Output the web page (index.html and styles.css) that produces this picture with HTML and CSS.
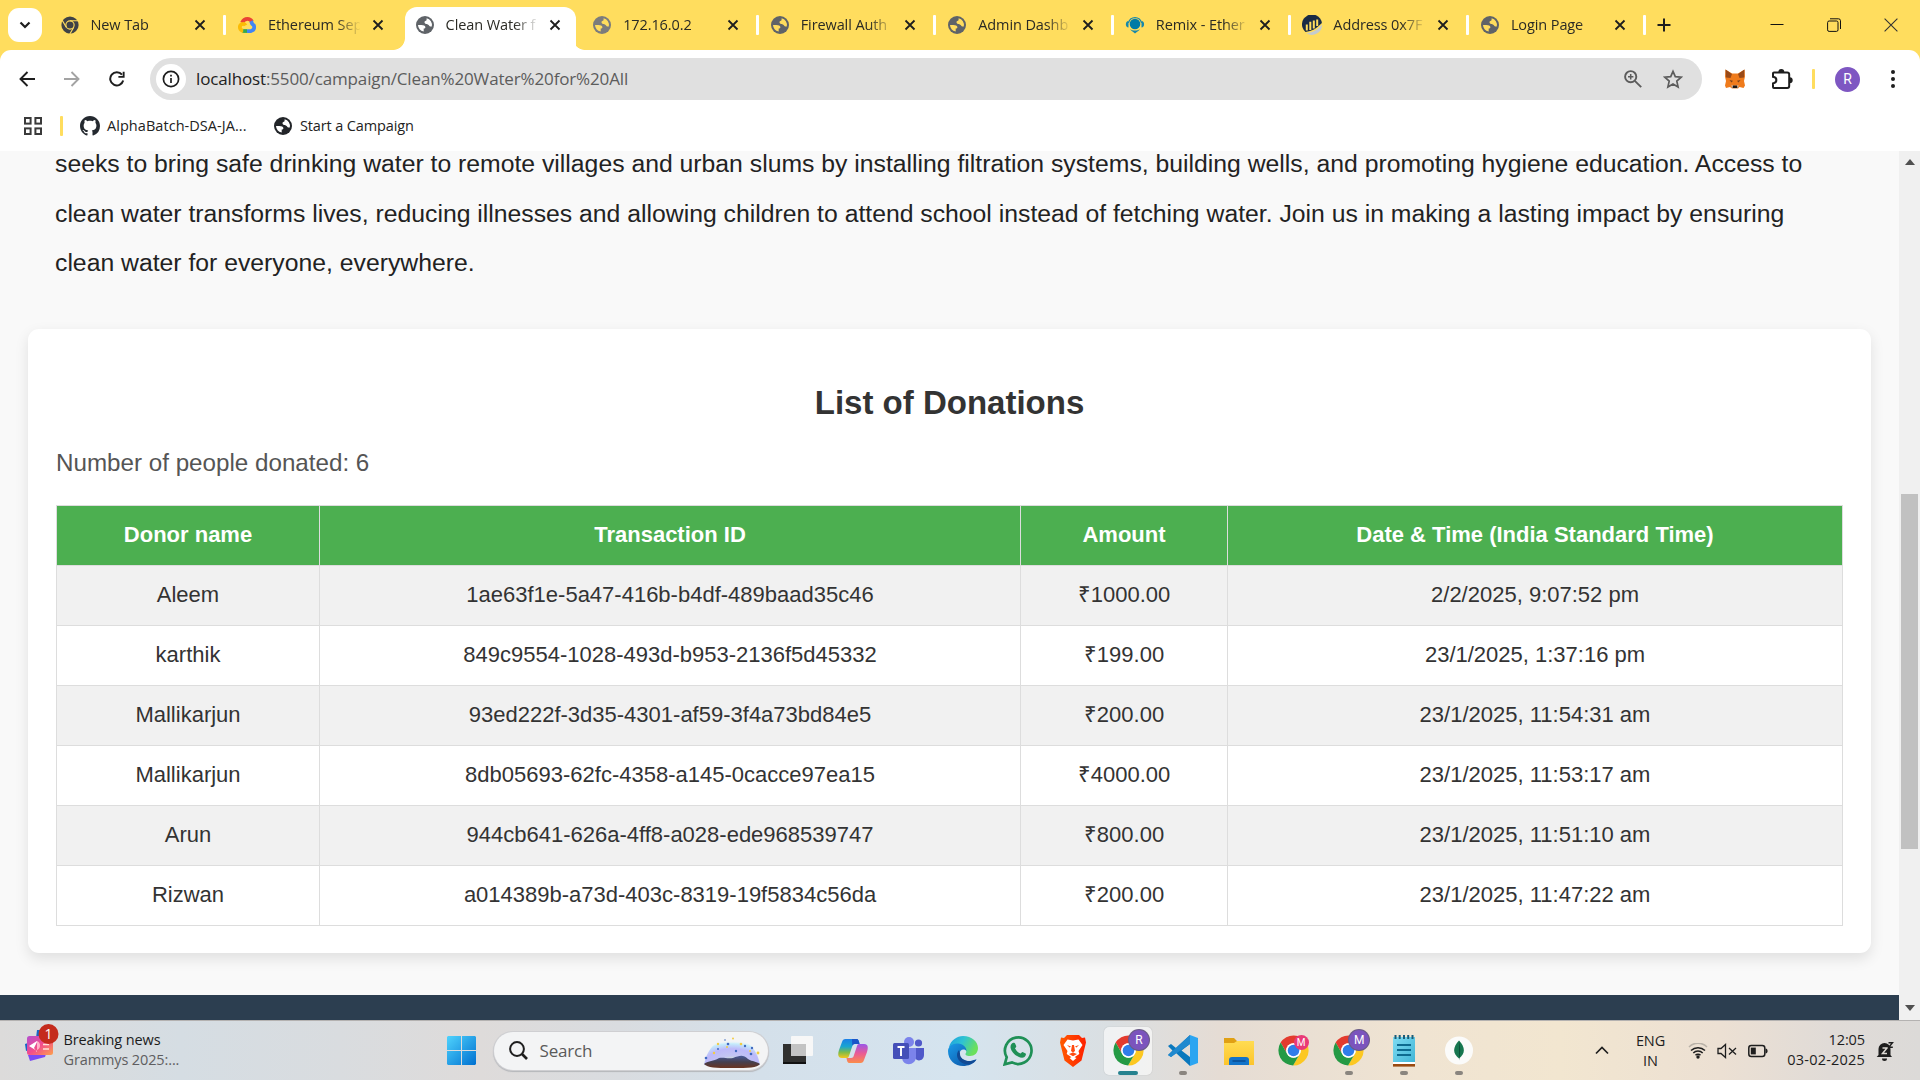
FILE: index.html
```html
<!DOCTYPE html>
<html lang="en">
<head>
<meta charset="utf-8">
<title>Clean Water for All</title>
<link rel="stylesheet" href="styles.css">
</head>
<body>
<svg class="defs" aria-hidden="true">
  <defs>
    <linearGradient id="win" x1="0" y1="0" x2="1" y2="1"><stop offset="0" stop-color="#4fd3fd"/><stop offset="1" stop-color="#0070d0"/></linearGradient>
    <linearGradient id="news" x1="0" y1="0" x2="1" y2="1"><stop offset="0" stop-color="#b44fd0"/><stop offset=".5" stop-color="#f24c8c"/><stop offset="1" stop-color="#fda14c"/></linearGradient>
    <linearGradient id="copA" x1="0" y1="0" x2="0" y2="1"><stop offset="0" stop-color="#1a7fe8"/><stop offset=".4" stop-color="#19a5d0"/><stop offset=".7" stop-color="#7dbb4a"/><stop offset="1" stop-color="#f6c61c"/></linearGradient>
    <linearGradient id="copB" x1="0" y1="0" x2="0" y2="1"><stop offset="0" stop-color="#9b57e8"/><stop offset=".5" stop-color="#ea5b95"/><stop offset="1" stop-color="#fb8d4a"/></linearGradient>
    <linearGradient id="edgeA" x1="0" y1="0" x2="1" y2=".4"><stop offset="0" stop-color="#1b9de2"/><stop offset=".5" stop-color="#2fc3d2"/><stop offset="1" stop-color="#6be05c"/></linearGradient>
    <linearGradient id="edgeB" x1="0" y1="0" x2="1" y2="1"><stop offset="0" stop-color="#1a9be8"/><stop offset="1" stop-color="#0b4da0"/></linearGradient>
    <linearGradient id="brave" x1="0" y1="0" x2="1" y2="0"><stop offset="0" stop-color="#ff5a00"/><stop offset="1" stop-color="#ff2000"/></linearGradient>
    <linearGradient id="folder" x1="0" y1="0" x2="0" y2="1"><stop offset="0" stop-color="#ffdc52"/><stop offset="1" stop-color="#fcc42c"/></linearGradient>
    <linearGradient id="note" x1="0" y1="0" x2="1" y2="1"><stop offset="0" stop-color="#7fdcf2"/><stop offset="1" stop-color="#3fb4d6"/></linearGradient>
    <radialGradient id="glow" cx=".5" cy=".85" r=".75"><stop offset="0" stop-color="#d5efc0"/><stop offset=".25" stop-color="#c3c6f3"/><stop offset=".6" stop-color="#bdb9fa"/><stop offset=".85" stop-color="#c4ecfb"/><stop offset="1" stop-color="#f1f5f9" stop-opacity="0"/></radialGradient>
    <linearGradient id="hill" x1="0" y1="0" x2="0" y2="1"><stop offset="0" stop-color="#4a5a98"/><stop offset=".5" stop-color="#45404f"/><stop offset="1" stop-color="#6b341f"/></linearGradient>
    <symbol id="globe" viewBox="0 0 18 18">
      <circle cx="9" cy="9" r="9" fill="currentColor"/>
      <path class="sea" d="M2 9h3.400c2 0 4 .7 4 2.300 0 .8-.7 1.200-1.700 1.200v2.900A6.900 6.900 0 0 1 2 9ZM10.600 2.200a7 7 0 0 1 5.200 8.300c-1.400.2-2.600-.2-2.900-1.200-.7-1.100-2.300-.8-3.400-1.500-1.400-.9-1.400-2.700.3-3 1-.1.800-1.600.8-2.600Z"/>
    </symbol>
    <symbol id="close" viewBox="0 0 12 12"><path d="M1.500 1.500l9 9m0-9l-9 9" fill="none" stroke="#1e1e1e" stroke-width="1.800"/></symbol>
    <symbol id="chrome" viewBox="0 0 48 48">
      <path fill="#e33b2e" d="M5.260 12.540A22 22 0 0 1 43.300 13.500H24A10.500 10.500 0 0 0 14.910 29.250Z"/>
      <path fill="#fcc822" d="M43.300 13.500A22 22 0 0 1 23.440 45.960L33.090 29.250A10.500 10.500 0 0 0 24 13.500Z"/>
      <path fill="#249a44" d="M23.440 45.960A22 22 0 0 1 5.260 12.540L14.910 29.250A10.500 10.500 0 0 0 33.090 29.250Z"/>
      <circle cx="24" cy="24" r="10.700" fill="#fff"/><circle cx="24" cy="24" r="8.400" fill="#2f7de9"/>
    </symbol>
  </defs>
</svg>

<div class="screen">
  <header class="browser">
    <div class="tabstrip">
      <div class="tab-search"><svg width="12" height="8" viewBox="0 0 12 8"><path d="M1.500 1.500L6 6l4.500-4.500" fill="none" stroke="#1e1e1e" stroke-width="2.200"/></svg></div>
      <div class="tabs">
        <div class="tab"><svg class="fav" viewBox="0 0 48 48"><circle cx="24" cy="24" r="23" fill="#3f4246"/><g fill="none" stroke="#ffdd5e" stroke-width="3"><circle cx="24" cy="24" r="11"/><path d="M24 12.500H46M14 30L3 11M34 30L23 49"/></g><circle cx="24" cy="24" r="6.500" fill="#3f4246"/></svg><span class="tab-title">New Tab</span><svg class="x"><use href="#close"/></svg></div>
        <div class="tab no-line"><svg class="fav" viewBox="0 0 20 18"><g fill="none" stroke-width="4.200"><path d="M4.500 6.500C6 3.200 8 2.300 10.500 2.300c2.300 0 4 1.200 5 3" stroke="#ea4335"/><path d="M14.500 4.800c1 2 .9 2.500 1.500 3.200 2.600 1.200 3.200 6.500-1.500 7.700h-4.500" stroke="#4285f4"/><path d="M10 15.700H4.700" stroke="#34a853"/><path d="M5.800 15.400C1.600 15.200.8 9.800 4 8.200c2-.9 3.600-.2 4.400 1.300" stroke="#fbbc05"/></g></svg><span class="tab-title">Ethereum Sep</span><svg class="x"><use href="#close"/></svg></div>
        <div class="tab active"><svg class="fav grey"><use href="#globe"/></svg><span class="tab-title">Clean Water f</span><svg class="x"><use href="#close"/></svg></div>
        <div class="tab"><svg class="fav grey light"><use href="#globe"/></svg><span class="tab-title">172.16.0.2</span><svg class="x"><use href="#close"/></svg></div>
        <div class="tab"><svg class="fav grey"><use href="#globe"/></svg><span class="tab-title">Firewall Auth</span><svg class="x"><use href="#close"/></svg></div>
        <div class="tab"><svg class="fav grey"><use href="#globe"/></svg><span class="tab-title">Admin Dashb</span><svg class="x"><use href="#close"/></svg></div>
        <div class="tab"><svg class="fav wide" viewBox="0 0 20 18"><circle cx="10" cy="8" r="5.300" fill="#007aa6"/><path d="M3.500 7a6.600 6.600 0 0 1 13 0" fill="none" stroke="#1788ab" stroke-width="1.300"/><path d="M3.500 5C0 5 0 11.500 3.500 11.500ZM16.500 5c3.500 0 3.500 6.500 0 6.500Z" fill="#1788ab"/><path d="M5 13c3 2 7 2 10 0-1 2-3 2.500-5 4.500-2-2-4-2.500-5-4.500Z" fill="#1788ab"/></svg><span class="tab-title">Remix - Ether</span><svg class="x"><use href="#close"/></svg></div>
        <div class="tab"><svg class="fav wide" viewBox="0 0 20 20"><path d="M3.500 17A10 10 0 1 1 19.900 8C14 14 10 16 3.500 17Z" fill="#192b45"/><path d="M4.500 18.200C11 17.500 16 14.500 20 9.500A10 10 0 0 1 4.500 18.200Z" fill="#c4cbcf"/><path d="M4.800 15.500V9.500M8.300 15V6.800M11.800 13.500V5.500M15.200 11V4.500" stroke="#ffdd5e" stroke-width="2"/></svg><span class="tab-title">Address 0x7F</span><svg class="x"><use href="#close"/></svg></div>
        <div class="tab"><svg class="fav grey"><use href="#globe"/></svg><span class="tab-title">Login Page</span><svg class="x"><use href="#close"/></svg></div>
      </div>
      <svg class="new-tab" width="14" height="14" viewBox="0 0 14 14"><path d="M7 .5v13M.5 7h13" stroke="#1e1e1e" stroke-width="2"/></svg>
      <div class="window-buttons">
        <svg width="14" height="14" viewBox="0 0 14 14"><path d="M.5 6.500h13" stroke="#111" stroke-width="1"/></svg>
        <svg width="14" height="14" viewBox="0 0 14 14" fill="none" stroke="#111"><rect x=".6" y="3" width="10.400" height="10.400" rx="1.500"/><path d="M3 .8h8.500a2 2 0 0 1 2 2V11"/></svg>
        <svg width="14" height="14" viewBox="0 0 14 14"><path d="M.6.600l12.800 12.800m0-12.800L.6 13.400" stroke="#333" stroke-width="1.100"/></svg>
      </div>
    </div>

    <div class="toolbar">
      <div class="nav">
        <svg width="16" height="16" viewBox="0 0 16 16"><path d="M8.500 1L1.500 8l7 7M1.500 8H16" fill="none" stroke="#1e1e1e" stroke-width="1.900"/></svg>
        <svg width="16" height="16" viewBox="0 0 16 16"><path d="M7.500 1l7 7-7 7M14.500 8H0" fill="none" stroke="#a3a3a3" stroke-width="1.900"/></svg>
        <svg width="16" height="16" viewBox="0 0 16 16"><path d="M14.200 9.500A6.600 6.600 0 1 1 13 3.700" fill="none" stroke="#1e1e1e" stroke-width="2"/><path d="M15.600.8v6H9.400V4.900h4.300V.8Z" fill="#1e1e1e"/></svg>
      </div>
      <div class="omnibox">
        <span class="site-info"><svg width="18" height="18" viewBox="0 0 18 18"><circle cx="9" cy="9" r="7.600" fill="none" stroke="#1e1e1e" stroke-width="1.700"/><path d="M9 8v5M9 4.800v1.800" stroke="#1e1e1e" stroke-width="1.700"/></svg></span>
        <span class="url"><b>localhost</b>:5500/campaign/Clean%20Water%20for%20All</span>
        <svg class="zoom" width="18" height="18" viewBox="0 0 18 18" fill="none" stroke="#5c5c5c" stroke-width="1.900"><circle cx="6.700" cy="6.700" r="5.600"/><path d="M10.800 10.800l6.400 6.400"/><path d="M6.700 4v5.400M4 6.700h5.400" stroke-width="1.500"/></svg>
        <svg width="20" height="20" viewBox="0 0 20 20"><path d="M10 2.300l2.300 5.400 5.900.5-4.400 3.900 1.300 5.800-5.100-3-5.100 3 1.300-5.800-4.400-3.900 5.900-.5Z" fill="none" stroke="#5c5c5c" stroke-width="1.700"/></svg>
      </div>
      <svg class="fox" width="22" height="20" viewBox="0 0 22 20"><path d="M1.500.5l6.500 4h6l6.500-4 .5 7-1 4.500 1 4.500-1.500 2.500-4-1L14 19.500H8L6 18l-4 1L1 16.500l1-4.500-1-4.500Z" fill="#ef7b1c"/><path d="M1.500.5L8 5 6.500 9 2 8.500ZM20.500.5L14 5l1.500 4 4.500-.5Z" fill="#994a18"/><path d="M5.500 11l3.500.8-1.500 1.700ZM16.500 11l-3.500.8 1.500 1.700Z" fill="#7d431b"/><path d="M7.500 16L8 19.500h6l.5-3.500-1 .5h-5Z" fill="#d9c3b3"/><path d="M9 16.500h4l.5 2.500h-5Z" fill="#201914"/></svg>
      <svg class="puzzle" width="22" height="22" viewBox="0 0 22 22"><path d="M3.500 4.500h12.700a2 2 0 0 1 2 2V18a2 2 0 0 1-2 2H3a1 1 0 0 1-1-1v-3.600c4.500-.6 4.500-6 0-6.600V5.500a1 1 0 0 1 1-1Z" fill="none" stroke="#1e1e1e" stroke-width="2"/><path d="M7.300 4a3 3 0 0 1 6 0ZM18.700 9.200a3 3 0 0 1 0 6Z" fill="#1e1e1e"/></svg>
      <span class="bar"></span>
      <span class="avatar">R</span>
      <svg class="dots" width="4" height="20" viewBox="0 0 4 20" fill="#1e1e1e"><circle cx="2" cy="3" r="2"/><circle cx="2" cy="10" r="2"/><circle cx="2" cy="17" r="2"/></svg>
    </div>

    <div class="bookmarks">
      <svg width="18" height="18" viewBox="0 0 18 18" fill="none" stroke="#3a3a3a" stroke-width="2"><rect x="1" y="1" width="5.600" height="5.600"/><rect x="11.400" y="1" width="5.600" height="5.600"/><rect x="1" y="11.400" width="5.600" height="5.600"/><rect x="11.400" y="11.400" width="5.600" height="5.600"/></svg>
      <span class="bar"></span>
      <svg class="github" width="20" height="20" viewBox="0 0 16 16"><path fill="#24292f" d="M8 0C3.580 0 0 3.580 0 8c0 3.540 2.290 6.530 5.470 7.590.4.070.55-.17.55-.38 0-.19-.01-.82-.01-1.490-2.010.37-2.530-.49-2.690-.94-.09-.23-.48-.94-.82-1.130-.28-.15-.68-.52-.01-.53.63-.01 1.080.58 1.230.82.72 1.210 1.870.87 2.330.66.070-.52.28-.87.51-1.070-1.780-.2-3.640-.89-3.640-3.950 0-.87.31-1.590.82-2.150-.08-.2-.36-1.020.08-2.120 0 0 .67-.21 2.200.82.64-.18 1.320-.27 2-.27s1.360.09 2 .27c1.530-1.040 2.200-.82 2.200-.82.44 1.100.16 1.920.08 2.120.51.56.82 1.270.82 2.150 0 3.070-1.870 3.750-3.650 3.950.29.25.54.73.54 1.480 0 1.070-.01 1.930-.01 2.200 0 .21.15.46.55.38A8.010 8.010 0 0 0 16 8c0-4.420-3.580-8-8-8Z"/></svg>
      <span class="bm first">AlphaBatch-DSA-JA...</span>
      <svg class="fav dark"><use href="#globe"/></svg>
      <span class="bm">Start a Campaign</span>
    </div>
  </header>

  <div class="viewport">
    <main class="page">
      <p class="about">seeks to bring safe drinking water to remote villages and urban slums by installing filtration systems, building wells, and promoting hygiene education. Access to<br>clean water transforms lives, reducing illnesses and allowing children to attend school instead of fetching water. Join us in making a lasting impact by ensuring<br>clean water for everyone, everywhere.</p>
      <section class="card">
        <h2>List of Donations</h2>
        <p class="count">Number of people donated: 6</p>
        <table>
          <colgroup><col class="c-name"><col class="c-id"><col class="c-amount"><col></colgroup>
          <thead><tr><th>Donor name</th><th>Transaction ID</th><th>Amount</th><th>Date &amp; Time (India Standard Time)</th></tr></thead>
          <tbody>
            <tr><td>Aleem</td><td>1ae63f1e-5a47-416b-b4df-489baad35c46</td><td>₹1000.00</td><td>2/2/2025, 9:07:52 pm</td></tr>
            <tr><td>karthik</td><td>849c9554-1028-493d-b953-2136f5d45332</td><td>₹199.00</td><td>23/1/2025, 1:37:16 pm</td></tr>
            <tr><td>Mallikarjun</td><td>93ed222f-3d35-4301-af59-3f4a73bd84e5</td><td>₹200.00</td><td>23/1/2025, 11:54:31 am</td></tr>
            <tr><td>Mallikarjun</td><td>8db05693-62fc-4358-a145-0cacce97ea15</td><td>₹4000.00</td><td>23/1/2025, 11:53:17 am</td></tr>
            <tr><td>Arun</td><td>944cb641-626a-4ff8-a028-ede968539747</td><td>₹800.00</td><td>23/1/2025, 11:51:10 am</td></tr>
            <tr><td>Rizwan</td><td>a014389b-a73d-403c-8319-19f5834c56da</td><td>₹200.00</td><td>23/1/2025, 11:47:22 am</td></tr>
          </tbody>
        </table>
      </section>
      <footer class="page-footer"></footer>
    </main>
    <div class="scrollbar">
      <svg width="10" height="6" viewBox="0 0 10 6"><path d="M0 6L5 0l5 6Z" fill="#505050"/></svg>
      <div class="thumb"></div>
      <svg width="10" height="6" viewBox="0 0 10 6"><path d="M0 0l5 6 5-6Z" fill="#505050"/></svg>
    </div>
  </div>

  <footer class="taskbar">
    <div class="news">
      <svg width="34" height="38" viewBox="0 0 34 38"><path d="M12 6h10v8H11ZM0 20l3-1 1 7-3 1Z" fill="#1565c8"/><path d="M3 31l18-1-1 3-15 4Z" fill="#7a4af5"/><rect x="2" y="12" width="26" height="19" rx="2.500" fill="url(#news)"/><path d="M4 22l8-5v10Z M9 24l3 4V18Z" fill="#fff"/><path d="M12 17c4 1 4 8 0 9Z" fill="#ffb0c8"/><path d="M18 20.500h6M18 25h6" stroke="#ffe1d6" stroke-width="1.700"/><circle cx="23.500" cy="10" r="10" fill="#c42b1c"/><text x="23.500" y="15" text-anchor="middle" class="badge">1</text></svg>
      <div class="news-text"><span>Breaking news</span><span class="muted">Grammys 2025:...</span></div>
    </div>
    <div class="app"><svg width="29" height="29" viewBox="0 0 29 29"><path d="M1 0h13v14H0V1ZM15 0h13l1 1v13H15ZM0 15h14v14H1l-1-1ZM15 15h14v13l-1 1H15Z" fill="url(#win)"/></svg></div>
    <div class="search">
      <svg width="19" height="19" viewBox="0 0 19 19" fill="none" stroke="#1e1e1e"><circle cx="8" cy="8" r="6.900" stroke-width="2"/><path d="M13 13l5 5" stroke-width="2.600"/></svg>
      <span>Search</span>
      <svg class="art" width="58" height="32" viewBox="0 0 58 32"><path d="M1 28C4 10 16 1 29 1s25 9 28 27Z" fill="url(#glow)"/><path d="M1 27c5-4 9-2 15-6 5-1 8 1 14 0 6-2 10-4 15 1 5 3 8 2 12 5-3 4-11 4-28 4S5 31 1 27Z" fill="url(#hill)"/><g fill="#3f69c0"><circle cx="3" cy="21" r="1.300"/><circle cx="15" cy="12" r="1"/><circle cx="25" cy="7" r="1.300"/><circle cx="33" cy="14" r="1.200"/><circle cx="42" cy="9" r="1.200"/><circle cx="49" cy="11" r="1.200"/><circle cx="48" cy="17" r="1.300"/><circle cx="22" cy="3" r=".8"/></g><g fill="#f2cc45"><circle cx="11" cy="16" r="1.200"/><circle cx="15" cy="7" r="1.200"/><circle cx="24" cy="10" r="1"/><circle cx="30" cy="1.500" r="1"/><circle cx="38" cy="7" r="1.300"/><circle cx="47" cy="14" r="1"/><circle cx="55" cy="16" r="1.400"/></g></svg>
    </div>
    <div class="apps">
      <div class="app"><svg width="30" height="30" viewBox="0 0 30 30"><path d="M0 8h23v20H0Z" fill="#30302f"/><path d="M0 26h23v2H0Z" fill="#111"/><rect x="8" y="0" width="22" height="20" rx="1" fill="#f7f7f7"/><path d="M8 8h15v12H8Z" fill="#c3c3c3"/></svg></div>
      <div class="app"><svg width="30" height="28" viewBox="0 0 30 28"><path d="M7.500 2h11c2 0 2.500 2 3 5H17c-2 0-2.500 1-3 3l-3 9c-.7 2-1.500 2-3 2H4c-4 0-4.500-3-3-8L4 5c.6-2 1.500-3 3.500-3Z" fill="url(#copA)"/><path d="M14 2h4.500c2 0 2.500 2 3 5H17c-1.500 0-2 .5-2.700 2Z" fill="#1a55c8"/><path d="M22.500 26h-11c-2 0-2.500-2-3-5H13c2 0 2.500-1 3-3l3-9c.7-2 1.500-2 3-2h4c4 0 4.500 3 3 8L26 23c-.6 2-1.500 3-3.500 3Z" fill="url(#copB)"/></svg></div>
      <div class="app"><svg width="31" height="28" viewBox="0 0 31 28"><circle cx="25.500" cy="6" r="3.600" fill="#5059c9"/><path d="M21 11h10v7c0 6-7 7-9 3Z" fill="#5059c9"/><circle cx="16" cy="5" r="5" fill="#7b83eb"/><path d="M9 11h14v9c0 9-14 10-14 0Z" fill="#7b83eb"/><rect x="0" y="6" width="16" height="16" rx="1.500" fill="#444fb8"/><path d="M4.500 10h7M8 10v9" stroke="#fff" stroke-width="1.900"/></svg></div>
      <div class="app"><svg width="30" height="30" viewBox="0 0 30 30"><path d="M1 11C3 4 9 0 15 0c9 0 15 6 15 12 0 5-3.500 8-8 8-4 0-5.500-1.500-4-3 1-2-.5-6-7-7-4 0-8 .5-10 1Z" fill="url(#edgeA)"/><path d="M0 15c0-5 5-8 10-7.500 5 .5 8.500 3.500 8.500 7.500-3-3-7-1-7 3 0 4 5 8 11 7 3-.7 5-2 6-1.500C26 28 20 30 15 30 7 30 0 24 0 15Z" fill="url(#edgeB)"/><path d="M11 14c-4 4-2 12 6 14 5 1 9-1 11.500-4.500-8 4-17 0-16.500-6Z" fill="#124a94"/></svg></div>
      <div class="app"><svg width="30" height="31" viewBox="0 0 30 31"><path d="M1.700 29.300l2-7A13.300 13.300 0 1 1 9 27.400Z" fill="none" stroke="#1f9056" stroke-width="2.700"/><path d="M10.300 7.800c.7-.3 1.500-.2 1.800.6l1.100 2.700c.2.600-.2 1.100-1.200 2.200 1.300 2.700 3.200 4.300 5.700 5.300.8-.8 1.300-1.800 1.900-1.600l3 1.500c.7.500.3 2.500-1.100 3.500-1.700 1.200-3.800.9-6.600-.5-3.800-1.900-6.600-5.500-7.300-8.600-.4-2.200.8-4.500 2.700-5.100Z" fill="#1f9056"/></svg></div>
      <div class="app"><svg width="26" height="32" viewBox="0 0 26 32"><path d="M7 0h12l3 3 3-.5 1 5-1 4-3.500 14L13 32 4.500 25.500 1 11.500l-1-4 1-5L4 3Z" fill="url(#brave)"/><path d="M7.500 4.500L13 5.500l5.500-1 4 5.500-4 6 .8 3-3.800 2.500-2.500 2-2.500-2-3.800-2.500.8-3-4-6Z" fill="#fff"/><path d="M7 10l4 1.500-1.500 1ZM19 10l-4 1.500 1.500 1ZM12 10h2l1 6-2 1.500-2-1.500ZM9 19l4-1.500 4 1.500-4 2.300Z" fill="#ff4a10"/><path d="M9.500 23l3.500-1.500 3.500 1.500-3.500 3Z" fill="#fff"/></svg></div>
      <div class="app current"><svg width="33" height="33"><use href="#chrome"/></svg><i class="profile">R</i></div>
      <div class="app running"><svg width="30" height="31" viewBox="0 0 30 31"><path d="M22 0L8 13 3 9 0 11l4.500 4.500L0 20l3 2 5-4 14 13V22l-8.500-6.500L22 9Z" fill="#0a78bd"/><path d="M3 22l-3-2L22 0v9Z" fill="#2089cf"/><path d="M22 0l8 3v25l-8 3Z" fill="#2ba5f1"/></svg></div>
      <div class="app"><svg width="30" height="28" viewBox="0 0 30 28"><path d="M0 1h10l3 3h17v20H0Z" fill="#e0a014"/><path d="M0 6h10l3-2h17v24H0Z" fill="url(#folder)"/><path d="M5 28v-5a3 3 0 0 1 3-3h14a3 3 0 0 1 3 3v5Z" fill="#1273c9"/><path d="M8.500 24h13" stroke="#0a4f96" stroke-width="1.600"/></svg></div>
      <div class="app"><svg width="33" height="33"><use href="#chrome"/></svg><i class="profile pink">M</i></div>
      <div class="app running"><svg width="33" height="33"><use href="#chrome"/></svg><i class="profile">M</i></div>
      <div class="app running"><svg width="22" height="32" viewBox="0 0 22 32"><rect y="2" width="22" height="27" fill="url(#note)"/><rect y="27" width="22" height="2" fill="#fff"/><rect y="29" width="22" height="2.600" fill="#9a4a10"/><path d="M2.500 0v4M6.700 0v4M11 0v4M15.200 0v4M19.500 0v4" stroke="#1a5c78" stroke-width="2"/><path d="M4 10h14M4 15h14M4 20h14" stroke="#0d6b90" stroke-width="1.800"/></svg></div>
      <div class="app running"><svg width="28" height="29" viewBox="0 0 28 29"><circle cx="14" cy="14.500" r="14" fill="#fbfbfa"/><path d="M14 4.500c6.500 7 6.500 13 0 18-6.500-5-6.500-11 0-18Z" fill="#16764f"/><path d="M14 4.500c1.500 7 1.500 13 0 20Z" fill="#0b5138"/></svg></div>
    </div>
    <div class="tray">
      <svg class="up" width="14" height="9" viewBox="0 0 14 9"><path d="M1 7.500l6-6 6 6" fill="none" stroke="#1e1e1e" stroke-width="1.700"/></svg>
      <div class="lang"><span>ENG</span><span>IN</span></div>
      <svg class="wifi" width="20" height="16" viewBox="0 0 20 16" fill="none" stroke-width="1.500"><path d="M1 6.500a12.500 12.500 0 0 1 18 0" stroke="#b9b2a8" transform="translate(0 -2.500)"/><path d="M3 7.500a10 10 0 0 1 14 0M5.300 10a6.600 6.600 0 0 1 9.400 0M7.500 12.200a3.500 3.500 0 0 1 5 0" stroke="#1e1e1e"/><circle cx="10" cy="14" r="1.700" fill="#1e1e1e"/></svg>
      <svg class="mute" width="20" height="16" viewBox="0 0 20 16" fill="none" stroke="#1e1e1e" stroke-width="1.300"><path d="M1 5.500h3L8.500 1.500v13L4 10.500H1Z"/><path d="M12 5l7 6.500m0-6.500l-7 6.500"/></svg>
      <svg class="battery" width="20" height="14" viewBox="0 0 20 14"><rect x=".8" y="1.500" width="16" height="11" rx="2.500" fill="none" stroke="#1e1e1e" stroke-width="1.500"/><rect x="2.800" y="3.600" width="5" height="6.800" fill="#1e1e1e"/><path d="M17.500 4.500c2.800 0 2.800 5 0 5Z" fill="#1e1e1e"/></svg>
      <div class="clock"><span>12:05</span><span class="date">03-02-2025</span></div>
      <svg class="bell" width="18" height="20" viewBox="0 0 18 20"><path d="M2.500 14V8a6 6 0 0 1 12 0v6l1.500 2H.7Z" fill="#1e1e1e"/><path d="M6 17.500h5a2.500 2.500 0 0 1-5 0Z" fill="#1e1e1e"/><path d="M6.500 7h4.500l-4.500 5.500H11" fill="none" stroke="#ddd9d4" stroke-width="1.500"/><path d="M12.500 1.700h4L12.800 6.300h4" fill="none" stroke="#1e1e1e" stroke-width="1.400"/></svg>
    </div>
  </footer>
</div>
</body>
</html>
```

FILE: styles.css
```css
* { box-sizing: border-box; }
body {
  margin: 0;
  overflow: hidden;
  font-family: "Open Sans", "Noto Sans", sans-serif;
}
svg { display: block; flex: none; }
.defs { position: absolute; width: 0; height: 0; }
.screen {
  width: 1920px;
  height: 1080px;
  display: flex;
  flex-direction: column;
  background: #fff;
}

/* Browser frame */
.browser { flex: none; height: 151px; background: #ffdd5e; }
.tabstrip { display: flex; height: 50px; align-items: center; }
.tab-search {
  width: 34px;
  height: 34px;
  margin-left: 8px;
  border-radius: 11px;
  background: #fff;
  display: grid;
  place-items: center;
}
.tabs { display: flex; margin-left: 5px; height: 50px; }
.tab {
  --sea: #ffdd5e;
  position: relative;
  width: 177.550px;
  flex: none;
  display: flex;
  align-items: center;
  padding-left: 12.500px;
}
.tab::after {
  content: "";
  width: 3px;
  height: 20px;
  border-radius: 1px;
  background: #fff;
  margin-left: auto;
  margin-right: -1.500px;
}
.tab.no-line::after, .tab.active::after { visibility: hidden; }
.tab.active::before {
  content: "";
  position: absolute;
  z-index: 0;
  left: 3px;
  top: 7px;
  width: 171px;
  height: 43px;
  border-radius: 12px 12px 0 0;
  background: #fff;
}
/* Flared feet on both sides of the selected tab */
.tab.active {
  --sea: #fff;
  margin: 0 -9px;
  padding-left: 21.500px;
  width: 195.550px;
  background:
    radial-gradient(circle at 0 0, transparent 11.500px, #fff 12.300px) left 0 bottom 0 / 12px 12px no-repeat,
    radial-gradient(circle at 100% 0, transparent 11.500px, #fff 12.300px) right 3.550px bottom 0 / 12px 12px no-repeat;
}
.tab.active::before { left: 12px; }
.tab.active > * { position: relative; }
.fav { width: 20px; height: 20px; padding: 1px; color: #5f6368; }
.fav.wide { padding: 0; }
.sea { fill: var(--sea, #fff); }
.light { color: #7c7c7c; }
.dark { color: #222529; }
.tab-title {
  width: 92px;
  margin-left: 11px;
  font-size: 14.500px;
  line-height: 20px;
  letter-spacing: -0.100px;
  color: #2a2a24;
  white-space: nowrap;
  -webkit-mask-image: linear-gradient(90deg, #000 68px, transparent 93px);
  mask-image: linear-gradient(90deg, #000 68px, transparent 93px);
}
.x { width: 12px; height: 12px; margin-left: 11.500px; }
.new-tab { margin-left: 12.500px; }
.window-buttons { margin-left: auto; display: flex; gap: 43px; padding-right: 22px; }

.toolbar {
  display: flex;
  align-items: center;
  height: 58px;
  background: #fff;
  border-radius: 11px 11px 0 0;
}
.nav { display: flex; gap: 29px; padding-left: 19px; width: 150px; }
.omnibox {
  width: 1552px;
  height: 42px;
  border-radius: 21px;
  background: #e0e0e0;
  display: flex;
  align-items: center;
  padding: 0 19.500px 0 6px;
}
.site-info {
  width: 30px;
  height: 30px;
  border-radius: 50%;
  background: #fff;
  display: grid;
  place-items: center;
}
.url {
  margin-left: 10px;
  font-size: 17px;
  line-height: 24px;
  letter-spacing: -0.140px;
  color: #5c5c5c;
}
.url b { font-weight: 400; color: #222; }
.zoom { margin-left: auto; margin-right: 21px; }
.fox { margin-left: 22px; }
.puzzle { margin-left: 24.500px; }
.bar { width: 3px; height: 20px; border-radius: 1px; background: #ffdd5e; }
.puzzle + .bar { margin-left: 19.500px; }
.avatar {
  width: 25px;
  height: 25px;
  margin-left: 20px;
  border-radius: 50%;
  background: #7e57c2;
  color: #fff;
  font: 14px/25px Roboto, sans-serif;
  text-align: center;
}
.dots { margin-left: 30.500px; }

.bookmarks {
  display: flex;
  align-items: center;
  height: 43px;
  padding: 0 0 8px 23.500px;
  background: #fff;
}
.bookmarks .bar { margin-left: 18.500px; }
.github { margin-left: 17px; }
.bm { font-size: 14.500px; letter-spacing: -0.130px; color: #222; margin-left: 7px; line-height: 20px; }
.bm.first { width: 141px; letter-spacing: 0.050px; white-space: nowrap; }
.bm.first + .fav { margin-left: 25px; }

/* Campaign page */
.viewport { flex: none; display: flex; height: 869px; background: #f9f9f9; overflow: hidden; }
.page {
  width: 1899px;
  font-family: "Liberation Sans", Arial, sans-serif;
  padding: 0 28px;
}
.about {
  margin: -12px 0 41.500px 27px;
  font-size: 24.750px;
  line-height: 49.500px;
  color: #222;
  white-space: nowrap;
}
.card {
  height: 624px;
  padding: 28px;
  border-radius: 11px;
  background: #fff;
  box-shadow: 0 5.500px 14px rgba(0, 0, 0, 0.1);
}
.card h2 {
  margin: 27px 0 0;
  font-size: 33px;
  line-height: 38px;
  text-align: center;
  color: #333;
}
.count { margin: 26px 0 28px; font-size: 24.200px; line-height: 29px; color: #555; }
table {
  width: 1787px;
  border-collapse: collapse;
  table-layout: fixed;
  font-size: 22px;
  line-height: 25px;
  color: #333;
}
.c-name { width: 263px; }
.c-id { width: 701px; }
.c-amount { width: 207px; }
th, td { height: 60px; padding: 0 0 2px; border: 1px solid #ddd; text-align: center; }
th { background: #4caf50; color: #fff; }
tbody tr:nth-child(odd) { background: #f1f1f1; }
.page-footer { margin: 42px -28px 0; height: 30px; background: #2c3e50; }

.scrollbar {
  width: 21px;
  background: #f0f0f0;
  display: flex;
  flex-direction: column;
  align-items: center;
  justify-content: space-between;
  padding: 8px 0 9px;
}
.thumb { width: 17px; height: 355px; margin-top: 329px; margin-bottom: auto; background: #c1c1c1; }

/* Taskbar */
.taskbar {
  flex: none;
  height: 60px;
  border-top: 1px solid #b4b2b1;
  display: flex;
  align-items: center;
  background: linear-gradient(90deg, #dcdbda 0, #d5dde3 180px, #d9dcdf 340px, #dedbda 480px, #d9dce0 620px, #d4e0ea 760px, #d5e4ef 960px, #dadfe2 1110px, #e5dcd4 1220px, #f0e4d2 1420px, #f2e6d0 1560px, #ece0d3 1720px, #e0dbd7 1830px, #dcdad8 1920px);
}
.news { width: 434px; display: flex; padding-left: 25px; }
.news svg { margin-top: -7px; }
.badge { font: 14px "Open Sans", sans-serif; fill: #fff; }
.news-text { display: flex; flex-direction: column; margin: -1px 0 0 4.500px; font-size: 14.500px; line-height: 20px; letter-spacing: -0.120px; color: #1c1c1c; }
.muted { color: #5e5e60; }
.app {
  position: relative;
  width: 55.100px;
  height: 48px;
  flex: none;
  display: grid;
  place-items: center;
}
.search {
  width: 274px;
  height: 38px;
  margin: 0 2px 0 4.500px;
  border-radius: 19px;
  background: #f3f4f5;
  box-shadow: 0 0 0 1px #cfcfd2, 0 1px 1px 1px #b4b6ba;
  display: flex;
  align-items: center;
  padding: 0 7px 0 15px;
  font-size: 17px;
  letter-spacing: -0.200px;
  color: #5a5a5a;
}
.search span { margin-left: 12px; }
.art { margin-left: auto; margin-top: 4px; }
.apps { display: flex; margin-left: 0.700px; }
.current::before {
  content: "";
  position: absolute;
  inset: 0 3.500px;
  border-radius: 5px;
  background: rgba(255, 255, 255, 0.6);
  box-shadow: 0 0 1px rgba(0, 0, 0, 0.25);
}
.current > svg { position: relative; }
.current::after, .running::after {
  content: "";
  position: absolute;
  bottom: 0;
  left: calc(50% - 4px);
  width: 8px;
  height: 4px;
  border-radius: 2px;
  background: #8a857f;
}
.current::after { left: calc(50% - 10px); width: 20px; background: #26828f; }
.profile {
  position: absolute;
  right: 7px;
  top: 3px;
  width: 20px;
  height: 20px;
  border-radius: 50%;
  background: #7b54bd;
  box-shadow: 0 0 0 1px #6a5b86;
  color: #fff;
  font: 12px/20px Roboto, sans-serif;
  text-align: center;
}
.profile.pink { width: 15px; height: 15px; right: 12.500px; top: 8px; background: #e93a77; box-shadow: none; font-size: 10px; line-height: 15px; }

.tray { margin-left: auto; display: flex; align-items: center; padding-right: 26px; font-size: 14.500px; line-height: 20px; letter-spacing: -0.100px; color: #1e1e1e; }
.lang, .clock { display: flex; flex-direction: column; }
.lang { width: 40px; margin-left: 21.500px; text-align: center; }
.wifi { margin-left: 17.500px; }
.mute { margin-left: 9px; }
.battery { margin-left: 11px; }
.clock { width: 84px; margin-left: 13px; text-align: right; white-space: nowrap; margin-top: -1px; }
.date { letter-spacing: 0.200px; }
.bell { margin-left: 11px; }
```
